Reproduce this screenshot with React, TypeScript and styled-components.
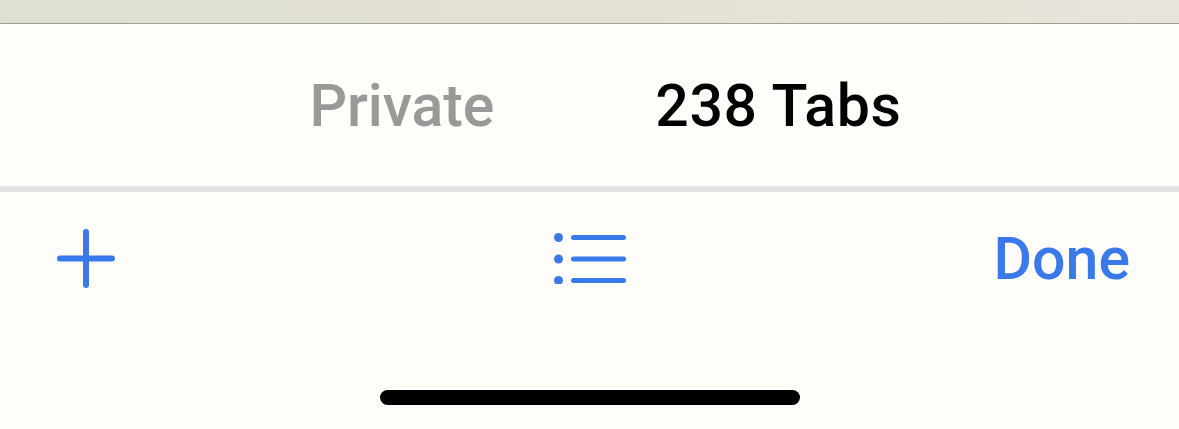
import styled, { createGlobalStyle } from 'styled-components';

const GlobalStyle = createGlobalStyle`
  html, body {
    margin: 0;
    padding: 0;
    background: #fefdfa;
  }
  body {
    font-family: Roboto, "Liberation Sans", sans-serif;
  }
`;

const Screen = styled.div`
  width: 1179px;
  height: 429px;
  overflow: hidden;
  display: flex;
  flex-direction: column;
  background: #fefdfa;
`;

const TopStrip = styled.div`
  height: 23px;
  background: linear-gradient(90deg, #e0dfd3 0%, #e3e1d6 50%, #e9e4db 100%);
  border-bottom: 1px solid #a0a095;
`;

const TabBar = styled.div`
  height: 162px;
  display: flex;
  align-items: center;
  justify-content: center;
  gap: 161px;
  padding-left: 32px;
  box-sizing: border-box;
`;

const TabLabel = styled.span<{ $active?: boolean }>`
  font-size: 59px;
  font-weight: 550;
  line-height: 1;
  letter-spacing: ${(props) => (props.$active ? '0.6px' : '-0.1px')};
  color: ${(props) => (props.$active ? '#000' : '#999997')};
`;

const Divider = styled.div`
  height: 6px;
  background: #e2e2e0;
`;

const Toolbar = styled.div`
  height: 132px;
  display: grid;
  grid-template-columns: 497px 72px 1fr;
  align-items: center;
  padding: 0 49px 0 57px;
  box-sizing: border-box;
`;

const ToolIcon = styled.svg`
  display: block;
  color: #3a79ea;
`;

const DoneButton = styled.span`
  justify-self: end;
  font-size: 59px;
  font-weight: 550;
  line-height: 1;
  color: #3a79ea;
`;

const HomeArea = styled.div`
  flex: 1;
  display: flex;
  justify-content: center;
`;

const HomeBar = styled.div`
  width: 420px;
  height: 15px;
  margin-top: 66px;
  border-radius: 8px;
  background: #000;
`;

function App() {
  return (
    <Screen>
      <GlobalStyle />
      <TopStrip />
      <TabBar>
        <TabLabel>Private</TabLabel>
        <TabLabel $active>238 Tabs</TabLabel>
      </TabBar>
      <Divider />
      <Toolbar>
        <ToolIcon width="58" height="59" viewBox="0 0 58 59" fill="none" stroke="currentColor" strokeWidth="6" strokeLinecap="round">
          <path d="M29 3V56M3 29.5H55" />
        </ToolIcon>
        <ToolIcon width="72" height="52" viewBox="0 -1 72 52" fill="currentColor" stroke="none">
          <circle cx="4.5" cy="4.5" r="4.5" />
          <circle cx="4.5" cy="26" r="4.5" />
          <circle cx="4.5" cy="47.5" r="4.5" />
          <rect x="17" y="2" width="55" height="5" rx="2.5" />
          <rect x="17" y="23.5" width="55" height="5" rx="2.5" />
          <rect x="17" y="45" width="55" height="5" rx="2.5" />
        </ToolIcon>
        <DoneButton>Done</DoneButton>
      </Toolbar>
      <HomeArea>
        <HomeBar />
      </HomeArea>
    </Screen>
  );
}

export default App;
